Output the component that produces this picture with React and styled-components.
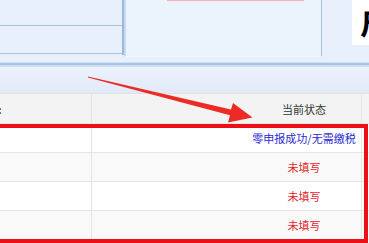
import React from "react";
import styled, { createGlobalStyle } from "styled-components";

const Global = createGlobalStyle`
  html, body { margin: 0; padding: 0; }
  *, *::before, *::after { box-sizing: border-box; }
  body {
    width: 369px; height: 243px; overflow: hidden; background: #fff;
    font-family: "Noto Sans CJK SC", "Noto Sans", sans-serif;
  }
`;

const Page = styled.div`
  position: relative;
  width: 369px;
  height: 243px;
  overflow: hidden;
  display: flex;
  flex-direction: column;
  & > * { flex: none; }
`;

const TopArea = styled.div`
  height: 62px;
  background: #e8f1fb;
  display: flex;
  align-items: flex-start;
`;

const LeftPanel = styled.div`
  width: 124px;
  height: 55px;
  border-right: 2px solid #9cb8dc;
  display: flex;
  flex-direction: column;
`;

const PanelRow = styled.div`
  height: ${(p) => p.$h}px;
  border-bottom: 1px solid #a8c2e2;
`;

const MidPanel = styled.div`
  width: 198px;
  height: 57px;
  background: #ebf4fd;
  border-left: 2px solid #c8daef;
  border-right: 1px solid #a9c3e3;
  border-bottom: 1px solid #f4f9fe;
  display: flex;
  flex-direction: column;
`;

const PinkEdge = styled.div`
  margin-left: 41px;
  width: 137px;
  height: 1px;
  background: #f6b4b6;
`;

const Gap = styled.div`
  width: 30px;
`;

const WhiteBox = styled.div`
  width: 17px;
  height: 45px;
  background: #fff;
  overflow: hidden;
`;

const BigGlyph = styled.span`
  display: block;
  margin-left: 8px;
  margin-top: -2px;
  font-size: 32px;
  line-height: 44px;
  font-weight: 700;
  color: #000;
  white-space: nowrap;
`;

const Separator = styled.div`
  height: 5px;
  background: linear-gradient(to bottom, #d2e2f4 0, #d2e2f4 1px, #a6c2e5 1px, #a6c2e5 3px, #cfdff2 3px);
`;

const Band = styled.div`
  height: 26px;
  background: linear-gradient(to bottom, #edf2fc, #e1e9f9);
`;

const Row = styled.div`
  height: ${(p) => p.$h}px;
  display: flex;
  background: ${(p) => p.$bg};
  border-top: ${(p) => (p.$top ? "1px solid #e2e2e2" : "none")};
  border-bottom: 1px solid #e6e6e6;
`;

const FirstCell = styled.div`
  width: 92px;
  border-right: 1px solid #e3e3e3;
  display: flex;
  align-items: center;
`;

const CutText = styled.span`
  margin-left: -2px;
  font-size: 11px;
  font-weight: 700;
  color: #333;
`;

const StatusCell = styled.div`
  width: 270px;
  border-right: 1px solid #e8e8e8;
  padding-left: 155px;
  display: flex;
  align-items: center;
  justify-content: center;
  font-size: 11px;
  white-space: nowrap;
  color: ${(p) => p.$color};
`;

const Redbox = styled.div`
  position: absolute;
  left: -4px;
  top: 124px;
  width: 372px;
  height: 119px;
  border: 4px solid #ec1016;
  pointer-events: none;
`;

const ArrowLayer = styled.svg`
  position: absolute;
  left: 0;
  top: 0;
  pointer-events: none;
`;

const rows = [
  { text: "零申报成功/无需缴税", color: "#2a2ad2", bg: "#ffffff" },
  { text: "未填写", color: "#e3262b", bg: "#f9f9f9" },
  { text: "未填写", color: "#e3262b", bg: "#ffffff" },
  { text: "未填写", color: "#e3262b", bg: "#f9f9f9" },
];

export default function App() {
  return (
    <>
      <Global />
      <Page>
        <TopArea>
          <LeftPanel>
            <PanelRow $h={26} />
            <PanelRow $h={28} />
          </LeftPanel>
          <MidPanel>
            <PinkEdge />
          </MidPanel>
          <Gap />
          <WhiteBox>
            <BigGlyph>户</BigGlyph>
          </WhiteBox>
        </TopArea>
        <Separator />
        <Band />
        <Row $h={31} $bg="#f3f3f3" $top>
          <FirstCell>
            <CutText>:</CutText>
          </FirstCell>
          <StatusCell $color="#333">当前状态</StatusCell>
        </Row>
        {rows.map((r, i) => (
          <Row key={i} $h={29} $bg={r.bg}>
            <FirstCell />
            <StatusCell $color={r.color}>{r.text}</StatusCell>
          </Row>
        ))}
        <Row $h={29} $bg="#ffffff">
          <FirstCell />
          <StatusCell $color="#333" />
        </Row>
        <Redbox />
        <ArrowLayer width="369" height="243" viewBox="0 0 369 243">
          <polygon
            points="88,76.4 231,109.6 233,103 252.5,117.5 228,122.5 230,115.2 88,77.6"
            fill="#ee2a24"
          />
        </ArrowLayer>
      </Page>
    </>
  );
}
